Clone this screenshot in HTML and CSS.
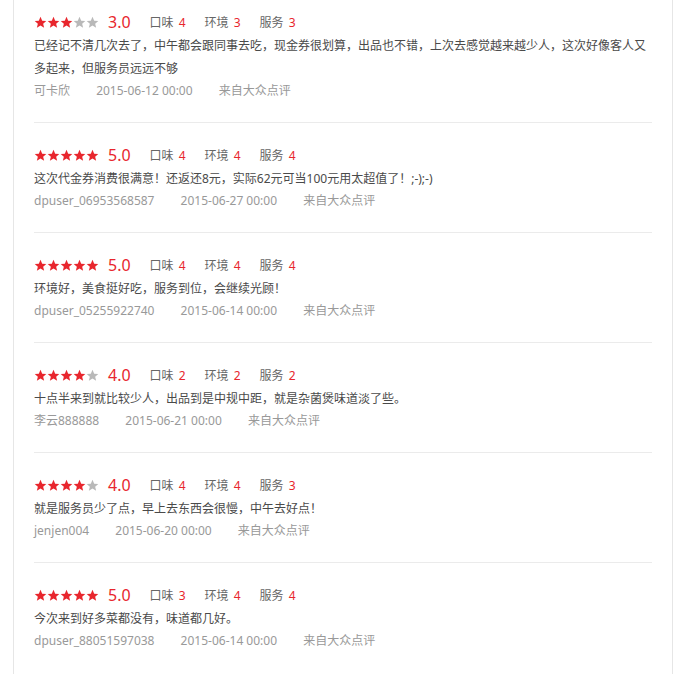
FILE: index.html
```html
<!DOCTYPE html>
<html lang="zh-CN">
<head>
  <meta charset="UTF-8" />
  <meta name="viewport" content="width=device-width, initial-scale=1.0"/>
  <title>点评</title>
  <link rel="stylesheet" href="styles.css">
</head>
<body>
  <svg width="0" height="0" style="position:absolute">
    <defs>
      <symbol id="star" viewBox="0 0 24 24">
        <path d="M12 1.5l3.1 7.1 7.6.6-5.8 5 1.8 7.5L12 17.7l-6.7 4 1.8-7.5-5.8-5 7.6-.6z"/>
      </symbol>
    </defs>
  </svg>

  <div class="comentarios" id="lista-comentarios"></div>

  <script>
    const comentarios = [
      { nota: 3, gosto: 4, ambiente: 3, servico: 3, texto: "已经记不清几次去了，中午都会跟同事去吃，现金券很划算，出品也不错，上次去感觉越来越少人，这次好像客人又多起来，但服务员远远不够", usuario: "可卡欣", data: "2015-06-12 00:00" },
      { nota: 5, gosto: 4, ambiente: 4, servico: 4, texto: "这次代金券消费很满意！还返还8元，实际62元可当100元用太超值了！;-);-)", usuario: "dpuser_06953568587", data: "2015-06-27 00:00" },
      { nota: 5, gosto: 4, ambiente: 4, servico: 4, texto: "环境好，美食挺好吃，服务到位，会继续光顾！", usuario: "dpuser_05255922740", data: "2015-06-14 00:00" },
      { nota: 4, gosto: 2, ambiente: 2, servico: 2, texto: "十点半来到就比较少人，出品到是中规中距，就是杂菌煲味道淡了些。", usuario: "李云888888", data: "2015-06-21 00:00" },
      { nota: 4, gosto: 4, ambiente: 4, servico: 3, texto: "就是服务员少了点，早上去东西会很慢，中午去好点！", usuario: "jenjen004", data: "2015-06-20 00:00" },
      { nota: 5, gosto: 3, ambiente: 4, servico: 4, texto: "今次来到好多菜都没有，味道都几好。", usuario: "dpuser_88051597038", data: "2015-06-14 00:00" }
    ];

    function estrelas(nota) {
      let html = "";
      for (let i = 1; i <= 5; i++) {
        const cls = i <= nota ? "on" : "off";
        html += `<svg class="estrela ${cls}"><use href="#star"/></svg>`;
      }
      return html;
    }

    function carregarComentarios() {
      const container = document.getElementById("lista-comentarios");
      comentarios.forEach(c => {
        const div = document.createElement("div");
        div.classList.add("item");
        div.innerHTML = `
          <div class="nota">
            <span class="estrelas">${estrelas(c.nota)}</span>
            <span class="valor">${c.nota.toFixed(1)}</span>
            <span class="sub">口味 <em>${c.gosto}</em></span>
            <span class="sub">环境 <em>${c.ambiente}</em></span>
            <span class="sub">服务 <em>${c.servico}</em></span>
          </div>
          <p class="texto">${c.texto}</p>
          <p class="meta">
            <span>${c.usuario}</span>
            <span>${c.data}</span>
            <span>来自大众点评</span>
          </p>
        `;
        container.appendChild(div);
      });
    }
    carregarComentarios();
  </script>
</body>
</html>
```

FILE: styles.css
```css
body {
  margin: 0;
  background-color: #fff;
  font-family: "Noto Sans", "Noto Sans CJK SC", sans-serif;
  font-size: 12px;
  color: #333;
}

.comentarios {
  margin: 0 15px 0 13px;
  padding: 0 20px 2px;
  border: 1px solid #e6e6e6;
  border-top: none;
}

.item {
  padding: 20px 0;
  border-top: 1px solid #ebebeb;
}

.item:first-child {
  padding-top: 10px;
  border-top: none;
}

.nota {
  display: flex;
  align-items: center;
  height: 24px;
}

.estrelas {
  display: flex;
  gap: 0;
  margin-right: 9px;
}

.estrela {
  width: 13px;
  height: 13px;
}

.estrela.on {
  fill: #e8262d;
}

.estrela.off {
  fill: #b9b9b9;
}

.valor { /* nota geral */
  font-size: 16px;
  color: #e8262d;
  margin-right: 19px;
}

.sub {
  color: #666;
  margin-right: 19px;
}

.sub em {
  font-style: normal;
  color: #e8262d;
  margin-left: 2px;
}

.texto {
  margin: 0;
  line-height: 23px;
  color: #4a4a4a;
}

.meta {
  margin: 0;
  line-height: 22px;
  color: #999;
}

.meta span {
  margin-right: 23px;
}
```
